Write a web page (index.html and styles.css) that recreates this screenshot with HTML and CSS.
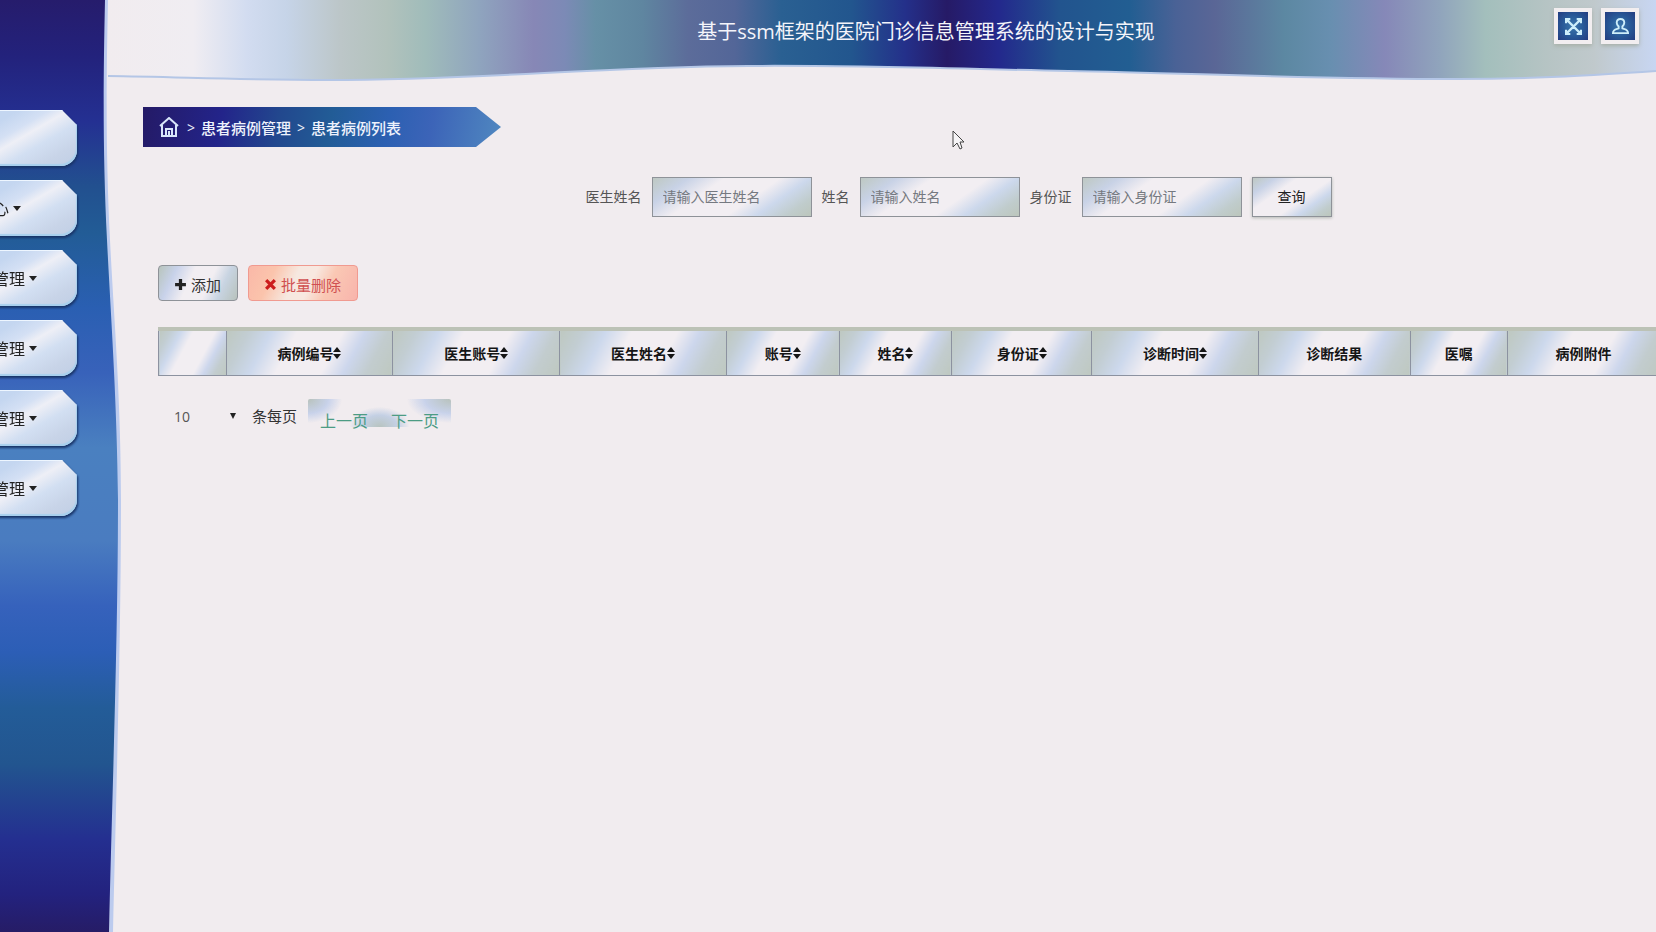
FILE: index.html
```html
<!DOCTYPE html>
<html lang="zh-CN">
<head>
<meta charset="utf-8">
<title>基于ssm框架的医院门诊信息管理系统的设计与实现</title>
<link rel="stylesheet" href="styles.css">
</head>
<body>
<div class="app">
  <aside class="sidebar">
    <svg class="sidebar-bg" viewBox="0 0 122 932" preserveAspectRatio="none" aria-hidden="true">
      <defs>
        <linearGradient id="side" gradientUnits="userSpaceOnUse" x1="0" y1="0" x2="0" y2="932">
          <stop offset="0" stop-color="#261c6c"/>
          <stop offset=".06" stop-color="#23227c"/>
          <stop offset=".13" stop-color="#243092"/>
          <stop offset=".2" stop-color="#22508f"/>
          <stop offset=".25" stop-color="#225c96"/>
          <stop offset=".33" stop-color="#2a5fb2"/>
          <stop offset=".4" stop-color="#3862ba"/>
          <stop offset=".48" stop-color="#4a80c0"/>
          <stop offset=".58" stop-color="#4a7cc0"/>
          <stop offset=".65" stop-color="#3662bc"/>
          <stop offset=".7" stop-color="#2c5eb6"/>
          <stop offset=".76" stop-color="#235c98"/>
          <stop offset=".82" stop-color="#22558f"/>
          <stop offset=".9" stop-color="#242f90"/>
          <stop offset=".96" stop-color="#23227e"/>
          <stop offset="1" stop-color="#261c66"/>
        </linearGradient>
      </defs>
      <path d="M0 0H108C106 90 106 160 110 240C114 320 121 400 121 500C121 640 116 800 113 932H0Z" fill="#bccbee"/>
      <path d="M0 0H105C103 90 103 160 107 240C111 320 117 400 118 500C118 640 112 800 109 932H0Z" fill="url(#side)"/>
    </svg>
    <nav>
      <ul class="menu">
        <li><button class="menu-item" type="button" aria-label="首页"></button></li>
        <li><button class="menu-item menu-item-short" type="button">心<span class="caret"></span></button></li>
        <li><button class="menu-item" type="button">管理<span class="caret"></span></button></li>
        <li><button class="menu-item" type="button">管理<span class="caret"></span></button></li>
        <li><button class="menu-item" type="button">管理<span class="caret"></span></button></li>
        <li><button class="menu-item" type="button">管理<span class="caret"></span></button></li>
      </ul>
    </nav>
  </aside>

  <div class="page">
    <header class="topbar">
      <svg class="topbar-bg" viewBox="0 0 1548 86" preserveAspectRatio="none" aria-hidden="true">
        <defs>
          <linearGradient id="top" gradientUnits="userSpaceOnUse" x1="0" y1="0" x2="1548" y2="0">
            <stop offset="0" stop-color="#f1ecef"/>
            <stop offset=".055" stop-color="#f0edf2"/>
            <stop offset=".09" stop-color="#d2dcf0"/>
            <stop offset=".115" stop-color="#c6d4e8"/>
            <stop offset=".15" stop-color="#bcc6c8"/>
            <stop offset=".18" stop-color="#b2c2bc"/>
            <stop offset=".205" stop-color="#a0bcba"/>
            <stop offset=".24" stop-color="#8fa4be"/>
            <stop offset=".275" stop-color="#8787b6"/>
            <stop offset=".295" stop-color="#7c8ab6"/>
            <stop offset=".315" stop-color="#6690a6"/>
            <stop offset=".345" stop-color="#5f86a0"/>
            <stop offset=".375" stop-color="#5c6c9a"/>
            <stop offset=".405" stop-color="#536698"/>
            <stop offset=".435" stop-color="#2a6092"/>
            <stop offset=".48" stop-color="#22568e"/>
            <stop offset=".515" stop-color="#24308a"/>
            <stop offset=".542" stop-color="#261a66"/>
            <stop offset=".575" stop-color="#23288c"/>
            <stop offset=".615" stop-color="#22548e"/>
            <stop offset=".66" stop-color="#225e92"/>
            <stop offset=".69" stop-color="#4a6296"/>
            <stop offset=".715" stop-color="#5a6696"/>
            <stop offset=".76" stop-color="#5c88a2"/>
            <stop offset=".79" stop-color="#688fb0"/>
            <stop offset=".825" stop-color="#8688b8"/>
            <stop offset=".86" stop-color="#90a4bc"/>
            <stop offset=".89" stop-color="#a3bfbc"/>
            <stop offset=".93" stop-color="#b6c4c4"/>
            <stop offset=".96" stop-color="#c0c9cc"/>
            <stop offset="1" stop-color="#c8d6f2"/>
          </linearGradient>
        </defs>
        <path d="M0 0H1548V71C1490 75 1430 79 1350 79C1200 79 1080 73 960 71C820 68 730 65 640 66C480 67 380 80 220 80C140 80 70 77 0 76Z" fill="url(#top)"/>
        <path d="M1548 71C1490 75 1430 79 1350 79C1200 79 1080 73 960 71C820 68 730 65 640 66C480 67 380 80 220 80C140 80 70 77 0 76" fill="none" stroke="#b4c6e6" stroke-width="2"/>
      </svg>
      <h1 class="title">基于ssm框架的医院门诊信息管理系统的设计与实现</h1>
      <div class="tools">
        <button class="tool" type="button" aria-label="全屏">
          <svg viewBox="0 0 16 16" aria-hidden="true"><path d="M2 2L14 14M14 2L2 14M1 5V1H5M11 1H15V5M15 11V15H11M5 15H1V11"/></svg>
        </button>
        <button class="tool" type="button" aria-label="用户">
          <svg viewBox="0 0 18 18" aria-hidden="true"><path d="M9 1C6 1 5 3 5 5C5 7 6 8 7 9V11C4 12 1 12 1 16H17C17 12 14 12 11 11V9C12 8 13 7 13 5C13 3 12 1 9 1Z"/></svg>
        </button>
      </div>
    </header>

    <main class="main">
      <nav class="crumbs" aria-label="面包屑">
        <a class="home" href="#" aria-label="首页"><svg viewBox="0 0 20 20" aria-hidden="true"><path d="M1 9L10 1L19 9M3 8V19H17V8M7 19V12H13V19M10 14V19"/></svg></a>
        <span class="sep">&gt;</span>
        <a href="#">患者病例管理</a>
        <span class="sep">&gt;</span>
        <a href="#">患者病例列表</a>
      </nav>

      <section class="panel">
        <form class="search">
          <label for="doctor">医生姓名</label>
          <input id="doctor" type="text" placeholder="请输入医生姓名">
          <label for="name">姓名</label>
          <input id="name" type="text" placeholder="请输入姓名">
          <label for="idcard">身份证</label>
          <input id="idcard" type="text" placeholder="请输入身份证">
          <button type="button">查询</button>
        </form>

        <div class="actions">
          <button class="btn" type="button"><svg viewBox="0 0 12 12" aria-hidden="true"><path d="M6 1V11M1 6H11"/></svg>添加</button>
          <button class="btn btn-danger" type="button"><svg viewBox="0 0 12 12" aria-hidden="true"><path d="M2 2L10 10M10 2L2 10"/></svg>批量删除</button>
        </div>

        <table class="grid">
          <colgroup>
            <col class="c-check"><col class="c-wide"><col class="c-wide"><col class="c-wide"><col class="c-small"><col class="c-small"><col class="c-id"><col class="c-wide"><col class="c-mid"><col class="c-tiny"><col class="c-mid">
          </colgroup>
          <thead>
            <tr>
              <th></th>
              <th>病例编号<span class="sort"></span></th>
              <th>医生账号<span class="sort"></span></th>
              <th>医生姓名<span class="sort"></span></th>
              <th>账号<span class="sort"></span></th>
              <th>姓名<span class="sort"></span></th>
              <th>身份证<span class="sort"></span></th>
              <th>诊断时间<span class="sort"></span></th>
              <th>诊断结果</th>
              <th>医嘱</th>
              <th>病例附件</th>
            </tr>
          </thead>
        </table>

        <div class="pager">
          <div class="size">
            <select id="size"><option>10</option><option>25</option><option>50</option></select>
          </div>
          <label for="size">条每页</label>
          <div class="pages">
            <a href="#">上一页</a>
            <a href="#">下一页</a>
          </div>
        </div>
      </section>
    </main>
  </div>

  <svg class="cursor" viewBox="0 0 13 20" aria-hidden="true"><path d="M1 1V17L5 13L8 19L10 18L8 12H12Z"/></svg>
</div>
</body>
</html>
```
FILE: styles.css
```css
* { box-sizing: border-box; }

:root {
  --sheen: linear-gradient(145deg, #bec8c2 0%, #c8d2e6 17%, #f2eef2 34%, #f2eef2 60%, #ccd8ec 74%, #c0cccc 88%, #bcc6bc 100%);
}

body {
  margin: 0;
  background: #f1ecef;
  color: #333;
  font-family: "Open Sans", "Noto Sans CJK SC", sans-serif;
  font-size: 14px;
  overflow: hidden;
}

button, input, select { font: inherit; color: inherit; }
a { color: inherit; text-decoration: none; }

.app {
  position: relative;
  display: flex;
  min-height: 100vh;
  overflow: hidden;
}

/* sidebar */
.sidebar {
  position: relative;
  z-index: 1;
  flex: 0 0 108px;
  padding-top: 110px;
}
.sidebar-bg {
  position: absolute;
  top: 0;
  left: 0;
  width: 122px;
  height: 100%;
}
.sidebar nav { position: relative; }
.menu {
  display: flex;
  flex-direction: column;
  gap: 14px;
  margin: 0 0 0 -20px;
  padding: 0;
  list-style: none;
}
.menu li {
  width: 97px;
  filter: drop-shadow(1px 2px 1px #183468);
}
.menu-item {
  display: flex;
  align-items: center;
  justify-content: flex-end;
  gap: 4px;
  width: 100%;
  height: 56px;
  padding: 0 40px 0 0;
  border: 0;
  border-radius: 0 0 16px 0;
  background: linear-gradient(150deg, #c4d6f0 20%, #d4e0f4 36%, #eeeff6 46%, #d2dff2 62%, #c8d4e8 80%, #c0cee4 100%);
  box-shadow: inset -1px -2px 1px #a8d0ee, inset 0 1px 0 #eef6ff;
  clip-path: polygon(0 0, 82px 0, 100% 15px, 100% 100%, 0 100%);
  color: #222;
  font-size: 16px;
  white-space: nowrap;
}
.menu-item-short { padding-right: 56px; }
.caret {
  border: 4px solid transparent;
  border-top: 5px solid #222;
  border-bottom: 0;
}

/* top bar */
.page { flex: 1; min-width: 0; }
.topbar {
  position: relative;
  display: grid;
  grid-template-columns: 1fr auto 1fr;
  align-items: start;
  height: 86px;
  padding: 8px 17px 0 105px;
}
.topbar-bg {
  position: absolute;
  inset: 0;
  width: 100%;
  height: 100%;
}
.title {
  position: relative;
  grid-column: 2;
  margin: 0;
  color: #f4f4fa;
  font-size: 20px;
  font-weight: 400;
  line-height: 48px;
}
.tools {
  position: relative;
  display: flex;
  justify-content: flex-end;
  gap: 9px;
}
.tool {
  display: grid;
  place-items: center;
  width: 38px;
  height: 36px;
  padding: 0;
  border: 4px solid #f2eef0;
  background: radial-gradient(circle, #3c78ac 0%, #285a98 50%, #233c80 100%);
  box-shadow: 0 2px 4px #a8b0a8;
}
.tool svg {
  width: 17px;
  height: 17px;
  fill: none;
  stroke: #cdeefa;
  stroke-width: 2;
}

/* breadcrumb */
.main { padding: 21px 0 0 35px; }
.crumbs {
  display: flex;
  align-items: center;
  gap: 6px;
  width: 358px;
  height: 40px;
  padding: 0 0 0 16px;
  background: linear-gradient(100deg, #241a66 0%, #23248a 22%, #22488e 38%, #225c96 52%, #2c60b2 68%, #3c64b8 80%, #5088c0 100%);
  clip-path: polygon(0 0, 333px 0, 100% 50%, 333px 100%, 0 100%);
  color: #eef2fc;
  font-size: 15px;
  font-weight: 500;
}
.home { margin-right: 2px; }
.home svg {
  display: block;
  width: 20px;
  height: 20px;
  fill: none;
  stroke: #d8e6fa;
  stroke-width: 2;
}
.sep { font-size: 14px; }

/* search */
.panel { padding: 30px 0 0 15px; margin-right: -4px; }
.search {
  display: flex;
  align-items: center;
  justify-content: center;
  gap: 10px;
  padding-left: 99px;
  color: #555;
}
.search input {
  width: 160px;
  height: 40px;
  padding: 0 10px 2px;
  border: 1px solid #8e9298;
  border-radius: 0;
  background: var(--sheen);
}
.search label { padding-bottom: 2px; }
.search input::placeholder { color: #757980; opacity: 1; }
.search button {
  width: 80px;
  height: 40px;
  padding: 0 0 2px;
  border: 1px solid #8e9298;
  background: var(--sheen);
  box-shadow: 0 1px 3px #b4b8b4;
  color: #222;
}

/* actions */
.actions {
  display: flex;
  gap: 10px;
  margin-top: 48px;
}
.btn {
  display: flex;
  align-items: center;
  gap: 4px;
  height: 36px;
  padding: 2px 16px 0 15px;
  border: 1px solid #8e9298;
  border-radius: 4px;
  background: linear-gradient(115deg, #b8c4bc 0%, #c8d2ea 20%, #f2eef2 40%, #f2eef2 62%, #c8d4e2 78%, #b8c2bc 100%);
  color: #333;
  font-size: 15px;
}
.btn svg {
  width: 13px;
  height: 13px;
  stroke: #222;
  stroke-width: 3;
}
.btn-danger {
  border-color: #f09a90;
  background: linear-gradient(115deg, #fab8a8 0%, #fbc4ac 22%, #f6e8e0 42%, #f8e8e0 56%, #fac8b4 72%, #f8b4ac 100%);
  color: #d05050;
}
.btn-danger svg { stroke: #cc1c1c; }

/* table */
.grid {
  width: 100%;
  margin-top: 26px;
  border-collapse: collapse;
  border-top: 4px solid #bcc2b6;
  table-layout: fixed;
}
.grid th {
  height: 46px;
  padding: 0;
  border: 1px solid #8c92a0;
  border-top: 0;
  background: linear-gradient(118deg, #bec8c0 0%, #c2cdd2 12%, #ccd8ec 24%, #f2eef2 38%, #f2eef2 62%, #ccd6ec 74%, #c2ccce 86%, #bec8c0 100%);
  color: #151515;
  font-size: 14px;
  font-weight: 700;
  white-space: nowrap;
}
.c-check { width: 4.5%; }
.c-wide { width: 11.1%; }
.c-small { width: 7.5%; }
.c-id { width: 9.3%; }
.c-mid { width: 10.1%; }
.c-tiny { width: 6.5%; }
.sort {
  display: inline-flex;
  flex-direction: column;
  gap: 2px;
  padding-bottom: 4px;
  vertical-align: middle;
}
.sort::before, .sort::after {
  content: "";
  border: 4px solid transparent;
}
.sort::before { border-top: 0; border-bottom: 5px solid #151515; }
.sort::after { border-bottom: 0; border-top: 5px solid #151515; }

/* pager */
.pager {
  display: flex;
  align-items: flex-start;
  margin-top: 23px;
  font-size: 15px;
  line-height: 34px;
}
.size { position: relative; width: 94px; }
.size::after {
  position: absolute;
  top: 14px;
  right: 16px;
  border: 3px solid transparent;
  border-top: 6px solid #222;
  border-bottom: 0;
  content: "";
}
.size select {
  width: 100%;
  height: 36px;
  padding: 0 16px;
  border: 0;
  appearance: none;
  background: none;
  color: #555;
  font-size: 14px;
}
.pages {
  display: flex;
  gap: 23px;
  margin-left: 11px;
  padding: 5px 12px 0;
  border-radius: 2px;
  background:
    radial-gradient(ellipse 30px 20px at 50% 100%, #b8c4c0 0%, #c4d0e4 60%, transparent 100%),
    radial-gradient(ellipse 34px 24px at 0 0, #b8c2bc 0%, #c8d2ea 60%, transparent 100%),
    radial-gradient(ellipse 44px 24px at 100% 0, #b8c2bc 0%, #c8d2ea 60%, transparent 100%);
  color: #4c9c84;
  font-size: 16px;
  height: 28px;
}

/* pointer */
.cursor {
  position: absolute;
  top: 130px;
  left: 952px;
  z-index: 2;
  width: 13px;
  height: 20px;
  fill: #f6f4f6;
  stroke: #444;
}
```
